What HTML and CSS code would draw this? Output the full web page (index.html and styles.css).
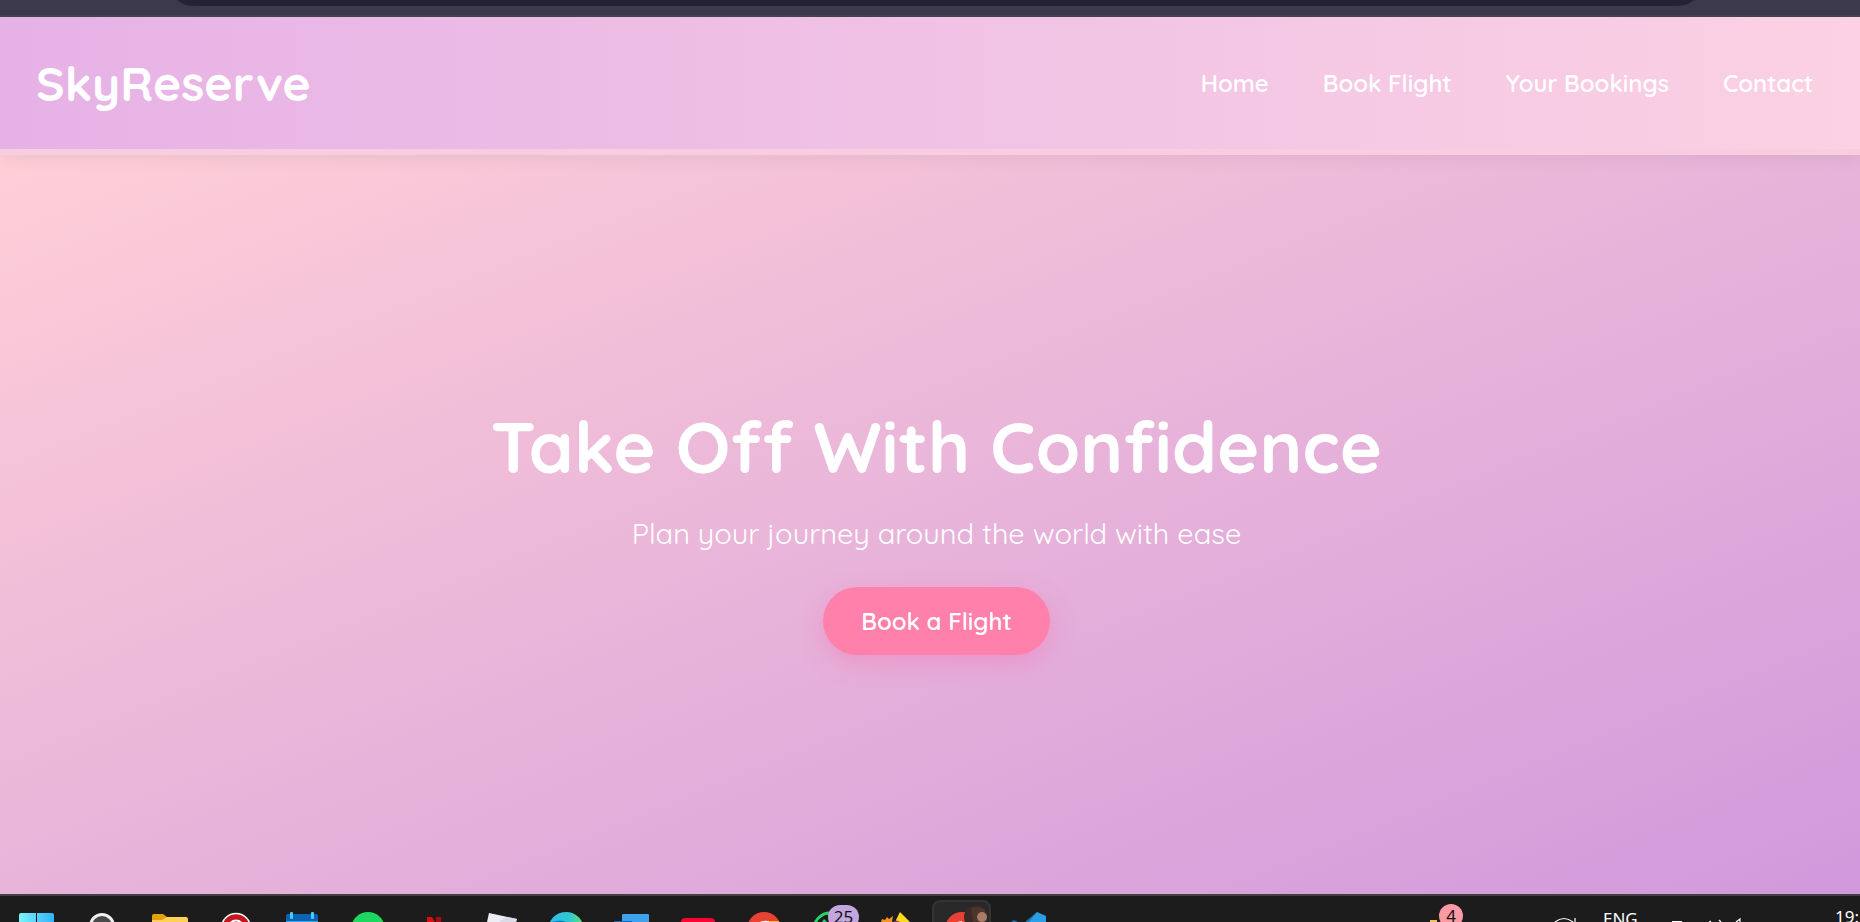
FILE: index.html
```html
<!DOCTYPE html>
<html lang="en">
<head>
<meta charset="utf-8">
<title>SkyReserve</title>
<link rel="stylesheet" href="styles.css">
</head>
<body>
<div class="browser-bar"><div class="address-pill"></div></div>
<header class="site-header">
  <div class="logo">SkyReserve</div>
  <nav class="nav">
    <a href="#home">Home</a>
    <a href="#book">Book Flight</a>
    <a href="#bookings">Your Bookings</a>
    <a href="#contact">Contact</a>
  </nav>
</header>
<main class="hero">
  <h1>Take Off With Confidence</h1>
  <p>Plan your journey around the world with ease</p>
  <button class="cta" type="button">Book a Flight</button>
</main>
<footer class="taskbar">
  <div class="apps">
    <div class="app"><svg viewBox="0 0 66 26"><defs><linearGradient id="win"><stop offset="0" stop-color="#7df3fb"/><stop offset="1" stop-color="#2fb4fa"/></linearGradient></defs><path d="M16 26V19a2 2 0 0 1 2-2h15v9zM34 17h15a2 2 0 0 1 2 2v7H34z" fill="url(#win)"/></svg></div>
    <div class="app"><svg viewBox="0 0 66 26"><circle cx="33" cy="30" r="11.5" fill="#4a4a4a" stroke="#f2f2f5" stroke-width="3"/></svg></div>
    <div class="app"><svg viewBox="0 0 66 26"><path d="M17 26v-6a2 2 0 0 1 2-2h9l4 3v5z" fill="#e2a208"/><path d="M17 26v-2h10l5-3h19a2 2 0 0 1 2 2v3z" fill="#ffd257"/></svg></div>
    <div class="app"><svg viewBox="0 0 66 26"><circle cx="35" cy="32" r="14.5" fill="#c3161f" stroke="#fff" stroke-width="1.5"/><circle cx="35" cy="32" r="7.5" fill="none" stroke="#fff" stroke-width="2"/></svg></div>
    <div class="app"><svg viewBox="0 0 66 26"><path d="M19 26v-6a2 2 0 0 1 2-2h28a2 2 0 0 1 2 2v6z" fill="#0c63b4"/><path d="M19 25h32v1H19z" fill="#31a9ee"/><rect x="23" y="16" width="3" height="7" rx="1" fill="#45cbf7"/><rect x="44" y="16" width="3" height="7" rx="1" fill="#45cbf7"/></svg></div>
    <div class="app"><svg viewBox="0 0 66 26"><circle cx="35" cy="33" r="17" fill="#1ed760"/></svg></div>
    <div class="app"><svg viewBox="0 0 66 26"><path d="M28 21h5l3 5h-8z" fill="#e50914"/><path d="M37 21h5v5h-5z" fill="#b10710"/></svg></div>
    <div class="app"><svg viewBox="0 0 66 26"><path d="M24 17l28 6-1 3H22z" fill="#edeef5"/><path d="M34 26l7-5 11 2-1 3z" fill="#d9dbe5"/></svg></div>
    <div class="app"><svg viewBox="0 0 66 26"><defs><linearGradient id="edge"><stop offset="0" stop-color="#2ebcf2"/><stop offset=".6" stop-color="#2fc8cf"/><stop offset="1" stop-color="#65e36c"/></linearGradient></defs><circle cx="35" cy="34" r="18" fill="url(#edge)"/><path d="M21 26q9-3 14 0z" fill="#137cb8"/></svg></div>
    <div class="app"><svg viewBox="0 0 66 26"><path d="M25 26v-7a1 1 0 0 1 1-1h25a1 1 0 0 1 1 1v7z" fill="#3fa0ec"/><path d="M17 25h18v1H17z" fill="#1766b8"/></svg></div>
    <div class="app"><svg viewBox="0 0 66 26"><path d="M18 26q0-4 5-4h24q5 0 5 4z" fill="#fa0434"/></svg></div>
    <div class="app"><svg viewBox="0 0 66 26"><circle cx="35" cy="33" r="17" fill="#e94235"/><path d="M31 26q4-2 8-1h11v1z" fill="#fff"/><path d="M40 25h10v1H40z" fill="#fbc116"/></svg></div>
    <div class="app"><svg viewBox="0 0 66 26"><circle cx="35" cy="33" r="16" fill="none" stroke="#25d366" stroke-width="3"/><path d="M27 26l2-3 3 3z" fill="#25d366"/></svg><span class="badge badge-chat">25</span></div>
    <div class="app"><svg viewBox="0 0 66 26"><path d="M20 26l1-3 3 1 2-3 2 2 4-3-1 6z" fill="#f7941d"/><path d="M35 24L39 16l10 10H35z" fill="#ffd91c"/><path d="M32 26q3-3 7 0z" fill="#893a79"/></svg></div>
    <div class="app app-active"><svg viewBox="0 0 66 26"><defs><clipPath id="face"><circle cx="49" cy="21" r="12"/></clipPath></defs><circle cx="35" cy="33" r="17" fill="#e94235"/><path d="M30 26l5-1v1z" fill="#fff"/><g clip-path="url(#face)"><path d="M32 7h30v20H32z" fill="#3a2a25"/><path d="M44 12q8-3 14 2v12H46z" fill="#4c352c"/><ellipse cx="55" cy="21" rx="5" ry="5" fill="#a87c67"/></g></svg></div>
    <div class="app"><svg viewBox="0 0 66 26"><path d="M32 26L44 16v10z" fill="#1878ba"/><path d="M44 16l9 4v6H36z" fill="#2b9fe4"/><path d="M18 26l3-2 4 2z" fill="#1279be"/></svg></div>
  </div>
  <div class="tray">
    <div class="weather"><svg viewBox="0 0 20 26"><path d="M6 24h7v2H6z" fill="#f3c54e"/></svg><span class="badge badge-news">4</span></div>
    <svg class="sync" viewBox="0 0 24 26"><path d="M1 26q9-7 18 0M21 22v4" fill="none" stroke="#fff" stroke-width="1.2"/></svg>
    <span class="lang">ENG</span>
    <svg class="status" viewBox="0 0 80 26"><path d="M9 25.500h10M46 26l2-1M56 24l2 2M73 26l4-3v3" fill="none" stroke="#fff" stroke-width="1.2"/></svg>
    <span class="clock">19:</span>
  </div>
</footer>
</body>
</html>
```
FILE: styles.css
```css
* { box-sizing: border-box; }
body {
  margin: 0;
  height: 100vh;
  display: flex;
  flex-direction: column;
  overflow: hidden;
  font-family: Quicksand, Lato, sans-serif;
  color: #fff;
}
.browser-bar {
  flex: none;
  height: 17px;
  padding: 0 158px 0 169px;
  overflow: hidden;
  background: #3c394d;
  border-bottom: 2px solid #42454f;
}
.address-pill {
  height: 48px;
  margin-top: -42px;
  border-radius: 24px;
  background: #242334;
}
.site-header {
  flex: none;
  position: relative;
  display: flex;
  align-items: center;
  justify-content: space-between;
  padding: 36px 47px 36px 36px;
  background: linear-gradient(90deg, #e6b2e6, #fbd1e3);
  border-bottom: 6px solid #f8cde0;
  box-shadow: 0 4px 16px rgba(0, 0, 0, 0.06);
}
.logo {
  font-size: 48px;
  line-height: 60px;
  font-weight: 700;
}
.nav {
  display: flex;
  gap: 54px;
}
.nav a {
  color: #fff;
  font-size: 24px;
  line-height: 30px;
  font-weight: 600;
  text-decoration: none;
}
.hero {
  flex: 1;
  display: flex;
  flex-direction: column;
  align-items: center;
  justify-content: center;
  padding: 6px 0 0 13px;
  background: linear-gradient(158deg, #ffced7, #d199dc);
}
.hero h1 {
  margin: 0 0 24px;
  font-size: 72px;
  line-height: 90px;
  font-weight: 700;
}
.hero p {
  margin: 0 0 36px;
  font-size: 29px;
  line-height: 36px;
}
.cta {
  padding: 19px 38px;
  border: 0;
  border-radius: 34px;
  background: #ff80ab;
  box-shadow: 0 8px 24px rgba(255, 100, 170, 0.35);
  color: #fff;
  font: 600 24px/30px Quicksand, Lato, sans-serif;
}
.taskbar {
  flex: none;
  height: 28px;
  display: flex;
  justify-content: space-between;
  overflow: hidden;
  padding-left: 3px;
  background: #1c1c1c;
  border-top: 2px solid #414141;
  font-family: "Noto Sans", sans-serif;
}
.apps, .tray { display: flex; }
.app { position: relative; width: 66px; height: 26px; }
.app svg { display: block; position: relative; width: 66px; height: 26px; }
.app-active::before {
  content: "";
  position: absolute;
  inset: 4px 2px -30px 5px;
  border: 2px solid #343434;
  border-radius: 8px;
  background: #292929;
}
.badge {
  position: absolute;
  display: block;
  color: #111;
  text-align: center;
  font-size: 17px;
  line-height: 24px;
}
.badge-chat { left: 33px; top: 9px; width: 31px; border-radius: 12px; background: #c3a6df; }
.badge-news { left: 15px; top: 8px; width: 24px; border-radius: 12px; background: #ff9aa5; }
.weather { position: relative; width: 130px; }
.weather svg { width: 20px; height: 26px; }
.sync { width: 24px; height: 26px; margin-right: 25px; }
.lang { font-size: 17px; line-height: 24px; padding-top: 11px; width: 60px; }
.status { width: 80px; height: 26px; margin-right: 92px; }
.clock { font-size: 17px; line-height: 24px; padding-top: 9px; width: 25px; }
```
